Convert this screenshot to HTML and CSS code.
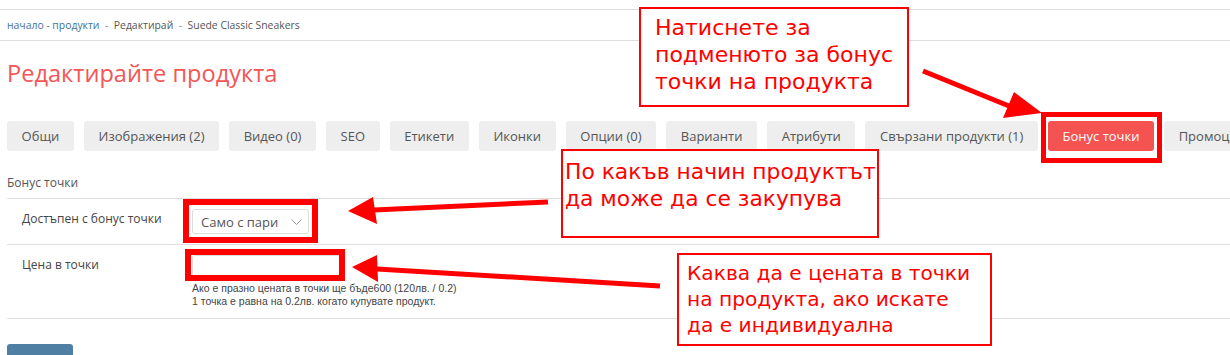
FILE: index.html
```html
<!DOCTYPE html>
<html lang="bg">
<head>
  <meta charset="UTF-8">
  <meta name="viewport" content="width=device-width, initial-scale=1.0">
  <title>Редактирайте продукта</title>
  <link rel="stylesheet" href="styles.css">
</head>
<body>
<div class="page">
  <div class="breadcrumb">
    <a href="#">начало - продукти</a><span class="sep">-</span><span>Редактирай</span><span class="sep">-</span><span>Suede Classic Sneakers</span>
  </div>

  <div class="content">
    <h1 class="title">Редактирайте продукта</h1>

    <ul class="tabs">
      <li>Общи</li>
      <li>Изображения (2)</li>
      <li>Видео (0)</li>
      <li>SEO</li>
      <li>Етикети</li>
      <li>Иконки</li>
      <li>Опции (0)</li>
      <li>Варианти</li>
      <li>Атрибути</li>
      <li>Свързани продукти (1)</li>
      <li class="active">Бонус точки</li>
      <li>Промоции</li>
    </ul>

    <form class="form">
      <div class="legend">Бонус точки</div>
      <div class="row">
        <label class="label">Достъпен с бонус точки</label>
        <div class="field">
          <div class="select">
            <select>
              <option>Само с пари</option>
              <option>С пари и точки</option>
            </select>
            <svg class="chevron" width="11" height="6" viewBox="0 0 11 6"><path d="M0.5 0.5 L5.5 5.5 L10.5 0.5" fill="none" stroke="#999" stroke-width="1"/></svg>
          </div>
        </div>
      </div>
      <div class="row">
        <label class="label">Цена в точки</label>
        <div class="field">
          <input class="input" type="text">
          <p class="help">Ако е празно цената в точки ще бъде600 (120лв. / 0.2)<br>1 точка е равна на 0.2лв. когато купувате продукт.</p>
        </div>
      </div>
      <button class="save" type="button">Запази</button>
    </form>
  </div>

  <!-- annotations drawn over the screenshot -->
  <div class="frame frame-tab"></div>
  <div class="frame frame-select"></div>
  <div class="frame frame-input"></div>

  <svg class="arrows" width="1230" height="355" viewBox="0 0 1230 355">
    <line x1="923" y1="71" x2="1009" y2="106" stroke="#f00" stroke-width="5"/>
    <polygon points="1003,118 1014,92 1042,113" fill="#f00"/>
    <line x1="548" y1="202" x2="374" y2="210" stroke="#f00" stroke-width="5"/>
    <polygon points="373,197 377,224 348,211" fill="#f00"/>
    <line x1="660" y1="286" x2="377" y2="269" stroke="#f00" stroke-width="5"/>
    <polygon points="377,255 378,282 352,267" fill="#f00"/>
  </svg>

  <div class="note note-menu">Натиснете за<br>подменюто за бонус<br>точки на продукта</div>
  <div class="note note-mode">По какъв начин продуктът<br>да може да се закупува</div>
  <div class="note note-price">Каква да е цената в точки<br>на продукта, ако искате<br>да е индивидуална</div>
</div>
</body>
</html>
```

FILE: styles.css
```css
html, body { margin: 0; padding: 0; background: #fff; overflow: hidden; }
body { font-family: "Open Sans", sans-serif; color: #555; }
.page { position: relative; padding-top: 9px; height: 346px; }

.breadcrumb { border-top: 1px solid #ddd; border-bottom: 1px solid #ddd; height: 30px; line-height: 30px; padding-left: 7px; font-size: 10.4px; color: #555; white-space: nowrap; }
.breadcrumb a { color: #44729c; text-decoration: none; }
.breadcrumb .sep { margin: 0 5.5px; color: #888; }

.content { padding-left: 7px; }
.title { margin: 17px 0 33px; font-size: 23.6px; line-height: 30px; font-weight: normal; color: #f45656; }

.tabs { display: flex; gap: 10px; margin: 0; padding: 0; list-style: none; overflow: hidden; }
.tabs li { flex: none; height: 30px; line-height: 30px; padding: 0 14.6px; background: #eee; border-radius: 3px; font-size: 13px; color: #555; white-space: nowrap; }
.tabs li.active { background: #f55252; color: #fff; }

.form { margin: 0; }
.legend { margin-top: 22px; line-height: 20px; padding-bottom: 5px; border-bottom: 1px solid #ddd; font-size: 12px; color: #555; }
.row { display: flex; padding: 10px 0; border-bottom: 1px solid #ddd; }
.label { flex: none; width: 185px; box-sizing: border-box; padding-left: 15px; font-size: 12px; line-height: 20px; color: #444; }
.field { flex: 1; }

.select { position: relative; width: 117px; }
.select select { display: block; width: 117px; height: 25px; box-sizing: border-box; padding: 0 8px; border: 1px solid #ddd; border-radius: 3px; background: #fff; font-family: "Open Sans", sans-serif; font-size: 13px; color: #555; -webkit-appearance: none; appearance: none; }
.chevron { position: absolute; right: 7px; top: 10px; }

.input { display: block; width: 150px; height: 24px; box-sizing: border-box; border: 1px solid #ddd; border-radius: 3px; }
.help { margin: 3px 0 0; font-family: "Liberation Sans", Arial, sans-serif; font-size: 10.5px; line-height: 13px; color: #444; }

.save { display: block; margin-top: 25px; width: 66px; height: 44px; line-height: 44px; padding: 0; border: none; border-radius: 3px; background: #4f7fa3; color: #fff; font-size: 13px; }

.frame { position: absolute; box-sizing: border-box; border: 6px solid #f00; }
.frame-tab { left: 1041px; top: 112px; width: 121px; height: 51px; border-width: 5px; }
.frame-select { left: 183px; top: 199px; width: 135px; height: 44px; }
.frame-input { left: 185px; top: 249px; width: 160px; height: 32px; }

.arrows { position: absolute; left: 0; top: 0; pointer-events: none; }

.note { position: absolute; box-sizing: border-box; border: 2px solid #f00; background: #fff; font-family: "DejaVu Sans", sans-serif; color: #f00; white-space: nowrap; }
.note-menu { left: 639px; top: 7px; width: 270px; height: 100px; padding: 5px 0 0 14px; font-size: 22px; line-height: 27px; }
.note-mode { left: 561px; top: 149px; width: 318px; height: 89px; padding: 7px 0 0 2px; font-size: 21.8px; line-height: 27px; }
.note-price { left: 677px; top: 253px; width: 315px; height: 93px; padding: 5px 0 0 8px; font-size: 20.2px; line-height: 26px; }
```
